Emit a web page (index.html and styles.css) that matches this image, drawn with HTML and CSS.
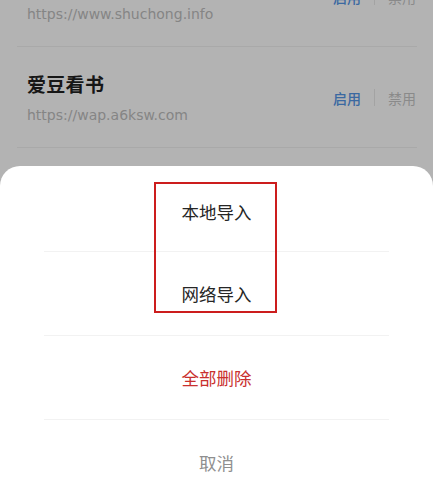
FILE: index.html
```html
<!DOCTYPE html>
<html lang="zh-CN">
<head>
<meta charset="utf-8">
<title>书源</title>
<link rel="stylesheet" href="styles.css">
</head>
<body>
<div class="screen">
  <ul class="source-list">
    <li class="source">
      <div class="info">
        <div class="name">书虫网</div>
        <div class="url">https://www.shuchong.info</div>
      </div>
      <div class="actions"><span class="on">启用</span><span class="sep"></span><span class="off">禁用</span></div>
    </li>
    <li class="source">
      <div class="info">
        <div class="name">爱豆看书</div>
        <div class="url">https://wap.a6ksw.com</div>
      </div>
      <div class="actions"><span class="on">启用</span><span class="sep"></span><span class="off">禁用</span></div>
    </li>
  </ul>
  <div class="sheet">
    <div class="sheet-item">本地导入</div>
    <div class="sheet-item">网络导入</div>
    <div class="sheet-item danger">全部删除</div>
    <div class="sheet-item cancel">取消</div>
    <div class="highlight"></div>
  </div>
</div>
</body>
</html>
```
FILE: styles.css
```css
* { box-sizing: border-box; }
html, body { margin: 0; padding: 0; }
body {
  background: #b3b3b3;
  font-family: "Noto Sans", "Noto Sans CJK SC", sans-serif;
  width: 433px;
  height: 499px;
  overflow: hidden;
}
.screen {
  position: relative;
  height: 499px;
  display: flex;
  flex-direction: column;
}
.source-list {
  list-style: none;
  margin: -54px 16px 0 17px;
  padding: 0;
}
.source {
  display: flex;
  align-items: center;
  justify-content: space-between;
  height: 101px;
  padding: 0 1px 0 10px;
  border-bottom: 1px solid #a9a9a9;
}
.info {
  display: flex;
  flex-direction: column;
  padding-top: 2px;
}
.name {
  font-family: "Noto Sans CJK SC", sans-serif;
  font-size: 19px;
  font-weight: 700;
  color: #161616;
  line-height: 26px;
  letter-spacing: 0.3px;
}
.url {
  font-family: "DejaVu Sans", sans-serif;
  font-size: 14px;
  color: #858585;
  line-height: 20px;
  margin-top: 8px;
}
.actions {
  display: flex;
  align-items: center;
  font-family: "Noto Sans CJK SC", sans-serif;
  font-size: 14px;
  line-height: 20px;
  margin-top: 1px;
}
.on { color: #3b69a1; font-weight: 500; }
.off { color: #8a8a8a; }
.sep {
  width: 1px;
  height: 17px;
  background: #a3a3a3;
  margin: 0 13px;
}
.sheet {
  position: relative;
  margin-top: 18px;
  flex: 1;
  background: #fff;
  border-radius: 20px 20px 0 0;
  padding: 2px 44px 0;
  display: flex;
  flex-direction: column;
}
.sheet-item {
  flex: 0 0 auto;
  height: 84px;
  display: flex;
  align-items: center;
  justify-content: center;
  border-bottom: 1px solid #f2f2f2;
  font-family: "Noto Sans CJK SC", sans-serif;
  font-size: 17.5px;
  color: #262626;
}
.sheet-item:first-child { padding-top: 4px; }
.sheet-item.danger { color: #c9302e; }
.sheet-item.cancel { color: #8f8f8f; border-bottom: none; }
.highlight {
  position: absolute;
  left: 154px;
  top: 16px;
  width: 123px;
  height: 131px;
  border: 2px solid #cc1d1d;
}
```
